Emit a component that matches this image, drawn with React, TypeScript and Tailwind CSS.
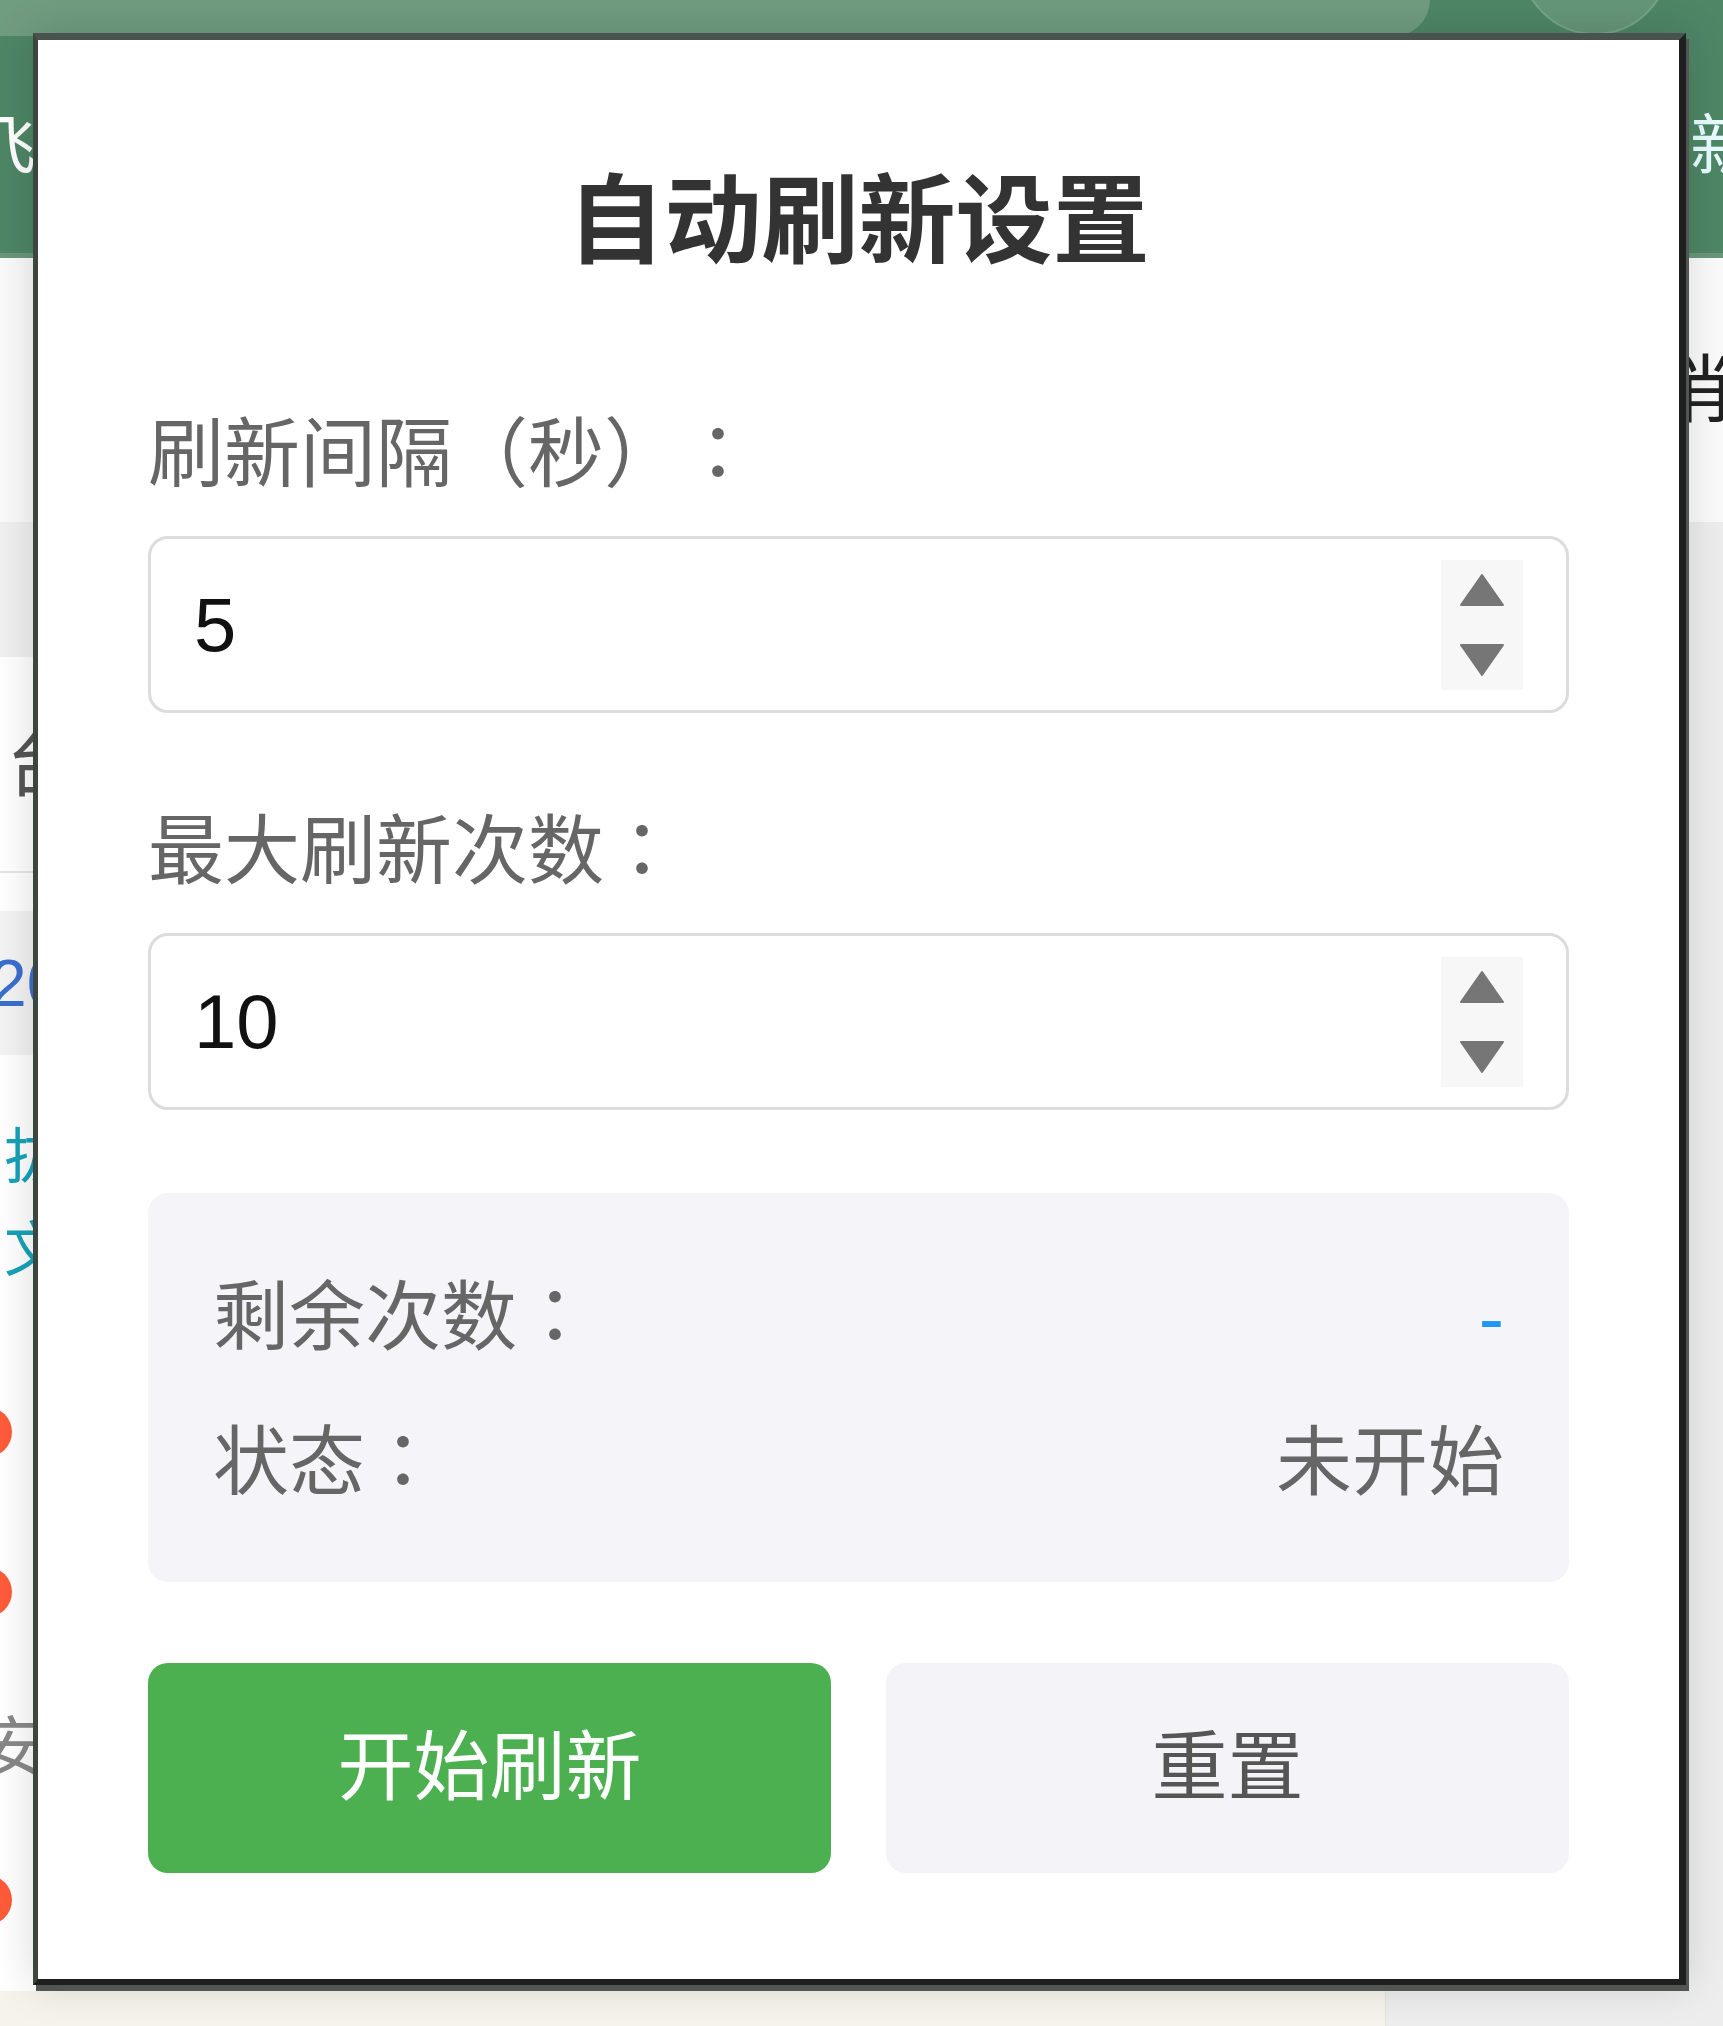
// Full-width colon centred in its box, as in the reference font.
function Colon() {
  return <span className="font-['Noto_Sans_CJK_TC',sans-serif] leading-[0px]">：</span>;
}

function Spinner() {
  return (
    <div className="flex h-[130px] w-[82px] flex-col items-center justify-center gap-[38px] bg-[#f7f7f7]">
      <svg width="44" height="32" viewBox="0 0 44 32">
        <path d="M22 1 L43 31 L1 31 Z" fill="#767676" strokeLinejoin="round" stroke="#767676" strokeWidth="2" />
      </svg>
      <svg width="44" height="32" viewBox="0 0 44 32">
        <path d="M1 1 L43 1 L22 31 Z" fill="#767676" strokeLinejoin="round" stroke="#767676" strokeWidth="2" />
      </svg>
    </div>
  );
}

function NumberField({ label, value }: { label: string; value: string }) {
  return (
    <>
      <div className="h-[114px] text-[76px] leading-[114px] text-[#666]">
        {label}
        <Colon />
      </div>
      <div className="mt-[24px] flex h-[177px] items-center justify-between rounded-[20px] border-[3px] border-[#dcdcdc] pl-[43px] pr-[43px] text-[76px] text-[#111]">
        <span>{value}</span>
        <Spinner />
      </div>
    </>
  );
}

function StatusRow({ label, children }: { label: string; children: React.ReactNode }) {
  return (
    <div className="flex h-[114px] justify-between">
      <span>
        {label}
        <Colon />
      </span>
      {children}
    </div>
  );
}

function RefreshModal() {
  return (
    <div className="absolute left-[33px] top-[33px] flex h-[1952px] w-[1653px] flex-col border-t-[7px] border-l-[5px] border-r-[7px] border-b-[6px] border-t-[#47534c] border-l-[#3c4640] border-r-[#1f1f1f] border-b-[#1f1f1f] bg-white px-[110px] pt-[110px] shadow-[3px_6px_0_0_#515653,0_0_40px_rgba(0,0,0,0.15)]">
      <h2 className="text-center text-[97px] font-bold leading-[144px] text-[#333]">自动刷新设置</h2>

      <div className="mt-[104px]">
        <NumberField label="刷新间隔（秒）" value="5" />
      </div>
      <div className="mt-[82px]">
        <NumberField label="最大刷新次数" value="10" />
      </div>

      <div className="mt-[83px] flex flex-col gap-[31px] rounded-[20px] bg-[#f5f5f9] px-[65px] pt-[68px] pb-[62px] text-[76px] leading-[114px] text-[#666]">
        <StatusRow label="剩余次数">
          <span className="text-[#2196f3]">-</span>
        </StatusRow>
        <StatusRow label="状态">
          <span>未开始</span>
        </StatusRow>
      </div>

      <div className="mt-[81px] grid grid-cols-2 gap-[55px] text-[76px]">
        <button className="h-[210px] rounded-[20px] bg-[#4caf50] text-white">开始刷新</button>
        <button className="h-[210px] rounded-[20px] bg-[#f4f4f8] text-[#555]">重置</button>
      </div>
    </div>
  );
}

function BackgroundPage() {
  return (
    <div className="flex h-full flex-col">
      <header className="relative h-[258px] shrink-0 overflow-hidden border-b-[5px] border-[#6a977b] bg-[#4e8666]">
        <div className="absolute left-0 top-0 h-[36px] w-[1430px] rounded-br-[70px] bg-[#709c80]" />
        <div className="absolute left-[1520px] top-[-115px] h-[150px] w-[150px] rounded-full border-2 border-[#78a486] bg-[#659679]" />
        <div className="relative flex h-full items-center justify-between pt-[40px] text-[66px] text-white">
          <span className="-ml-[30px]">飞</span>
          <span className="-mr-[33px] text-[#e8fbff]">新</span>
        </div>
      </header>

      <div className="flex flex-1">
        <div className="flex flex-1 flex-col">
          <div className="h-[264px] bg-[#fafafa]" />
          <div className="h-[135px] bg-[#f0f0f0]" />
          <div className="flex h-[216px] items-center border-b-2 border-[#e6e6e6] pl-[6px] text-[74px] text-[#555]">台</div>
          <div className="h-[38px]" />
          <div className="flex h-[144px] items-center bg-[#f3f3f3] text-[66px] text-[#3b6fce]">
            <span className="-ml-[10px]">20</span>
          </div>
          <div className="mt-[56px] pl-[4px] text-[60px] leading-[93px] text-[#17a2b8]">
            <div>拔</div>
            <div>文</div>
          </div>
          <div className="mt-[110px] -ml-[38px] h-[50px] w-[50px] rounded-full bg-[#ff5b3a]" />
          <div className="mt-[110px] -ml-[38px] h-[50px] w-[50px] rounded-full bg-[#ff5b3a]" />
          <div className="mt-[91px] -ml-[20px] text-[66px] leading-[80px] text-[#888]">安</div>
          <div className="mt-[87px] -ml-[38px] h-[50px] w-[50px] rounded-full bg-[#ff5b3a]" />
          <div className="mt-auto h-[35px] bg-[#f5f3ec]" />
        </div>
        <div className="flex w-[338px] flex-col border-l border-[#e2e2e2]">
          <div className="flex h-[264px] items-center bg-[#fafafa] pl-[272px] text-[74px] text-[#222]">
            消<span className="ml-[4px] text-[#e08a2a]">.</span>
          </div>
          <div className="flex-1 bg-[#ededed]" />
        </div>
      </div>
    </div>
  );
}

export default function App() {
  return (
    <div className="relative h-[2026px] w-[1723px] overflow-hidden bg-white font-['Liberation_Sans','Noto_Sans_CJK_SC',sans-serif] [text-spacing-trim:space-all]">
      <BackgroundPage />
      <RefreshModal />
    </div>
  );
}
